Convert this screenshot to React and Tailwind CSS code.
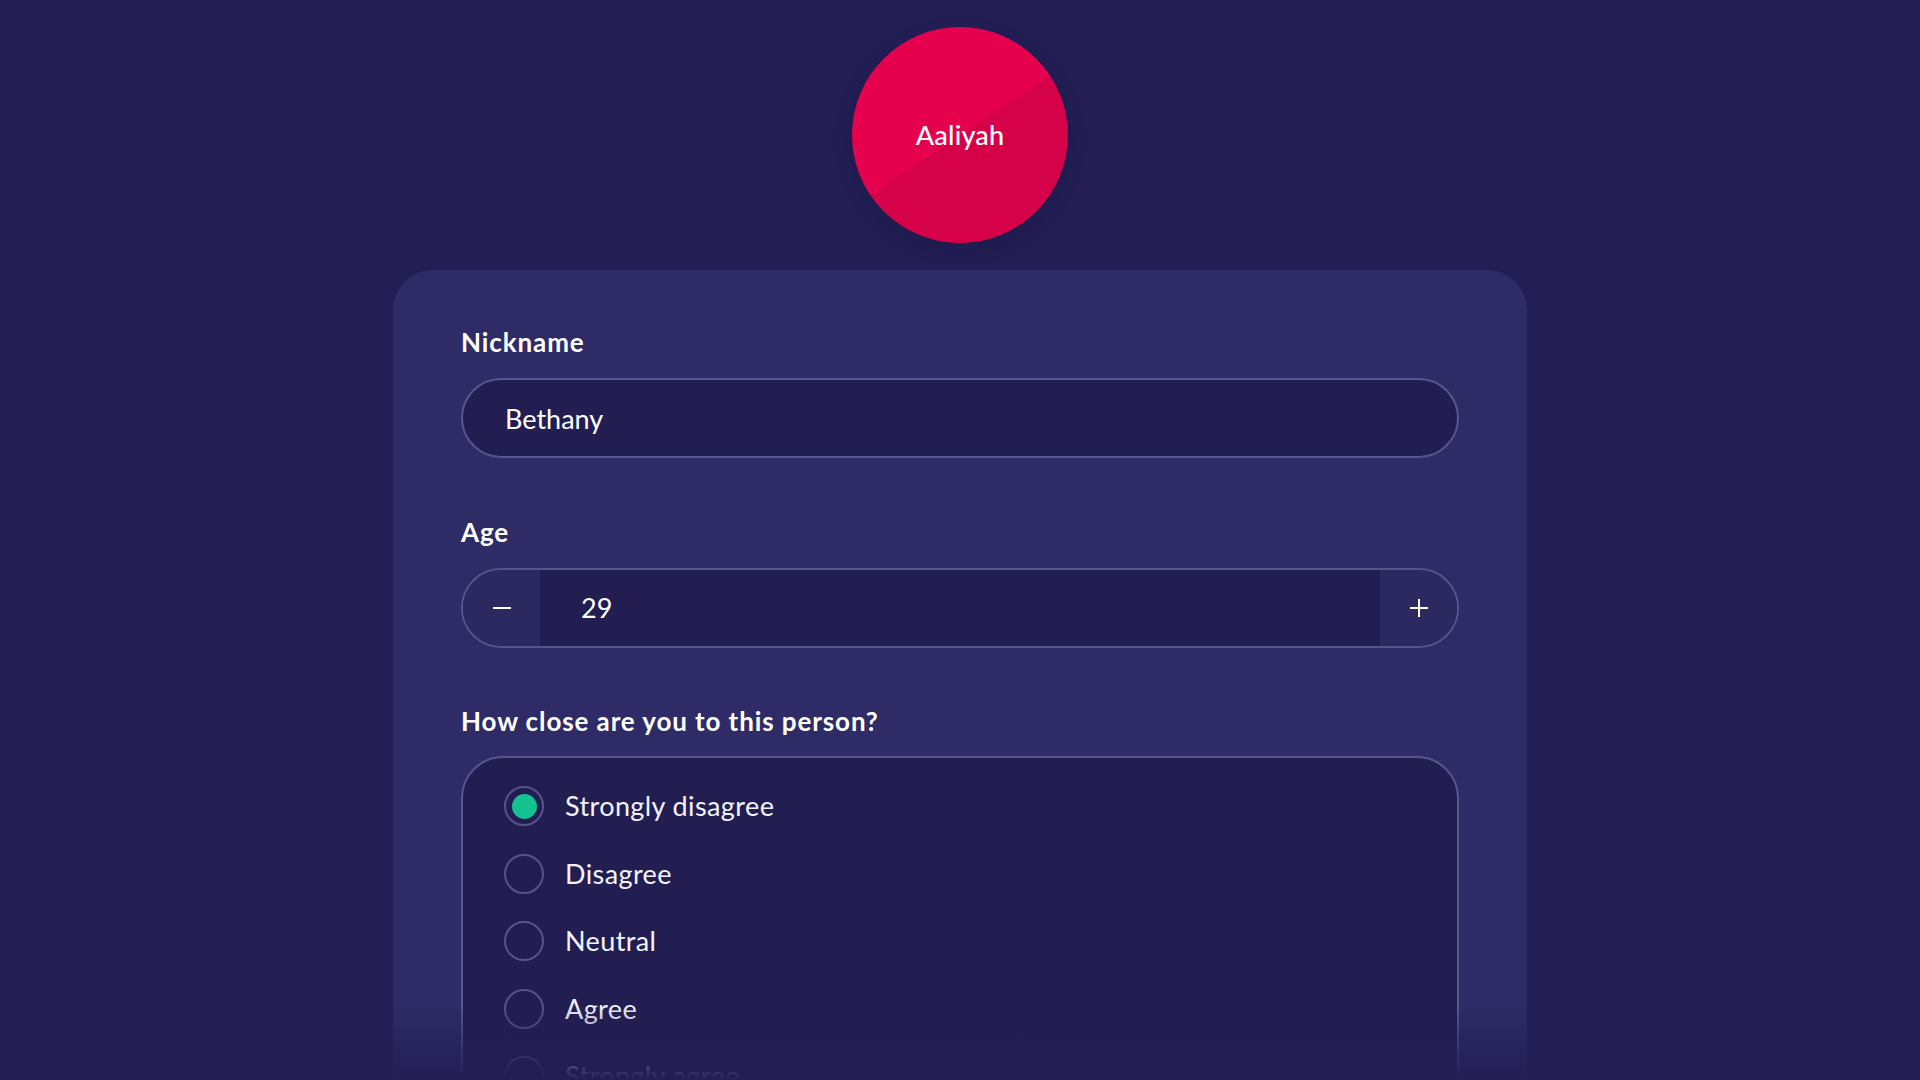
import { useState } from 'react'

const options = ['Strongly disagree', 'Disagree', 'Neutral', 'Agree', 'Strongly agree']

export default function App() {
  const [nickname, setNickname] = useState('Bethany')
  const [age, setAge] = useState(29)
  const [closeness, setCloseness] = useState(0)

  return (
    <div className="relative h-screen overflow-hidden bg-[#231f55] font-['Lato',sans-serif] text-white">
      <div className="flex flex-col items-center">
        <div className="mt-[27px] flex h-[216px] w-[216px] items-center justify-center rounded-full bg-[linear-gradient(146deg,#e6014f_50%,#d5024a_50%)] shadow-[0_6px_18px_rgba(10,8,40,0.2)]">
          <span className="text-[27px] font-medium tracking-[0.2px]">Aaliyah</span>
        </div>

        <div className="mt-[27px] w-[1134px] rounded-[40px] bg-[#2e2b66] px-[68px] pt-[57px] pb-[80px]">
          <label className="mb-[21px] block text-[26px] leading-[30px] font-bold tracking-[0.9px]">Nickname</label>
          <input
            value={nickname}
            onChange={(e) => setNickname(e.target.value)}
            className="block h-[80px] w-full rounded-full border-2 border-[#58558d] bg-[#221e52] px-[42px] text-[27px] text-white outline-none"
          />

          <label className="mt-[59px] mb-[21px] block text-[26px] leading-[30px] font-bold tracking-[0.9px]">Age</label>
          <div className="flex h-[80px] w-full overflow-hidden rounded-full border-2 border-[#58558d] bg-[#221e52]">
            <button
              onClick={() => setAge(age - 1)}
              className="flex w-[77px] items-center justify-center bg-[#2c2960]"
            >
              <span className="h-[2px] w-[18px] bg-white" />
            </button>
            <div className="flex flex-1 items-center pl-[41px] text-[27px]">{age}</div>
            <button
              onClick={() => setAge(age + 1)}
              className="relative flex w-[77px] items-center justify-center bg-[#2c2960]"
            >
              <span className="absolute h-[2px] w-[18px] bg-white" />
              <span className="absolute h-[18px] w-[2px] bg-white" />
            </button>
          </div>

          <label className="mt-[58px] mb-[20px] block text-[26px] leading-[30px] font-bold tracking-[0.9px]">
            How close are you to this person?
          </label>
          <div className="flex flex-col gap-[27px] rounded-[42px] border-2 border-[#58558d] bg-[#221e52] px-[41px] pt-[28px] pb-[30px]">
            {options.map((opt, i) => (
              <button key={opt} onClick={() => setCloseness(i)} className="flex items-center gap-[21px] text-left">
                <span className="flex h-[40px] w-[40px] items-center justify-center rounded-full border-2 border-[#57548b]">
                  {closeness === i && <span className="h-[25px] w-[25px] rounded-full bg-[#13c28f]" />}
                </span>
                <span className="text-[27px] tracking-[0.4px] text-[#f4f3fb]">{opt}</span>
              </button>
            ))}
          </div>
        </div>
      </div>

      <div className="pointer-events-none absolute inset-x-0 bottom-0 h-[75px] bg-gradient-to-b from-[#231f5500] to-[#231f55]" />
    </div>
  )
}
